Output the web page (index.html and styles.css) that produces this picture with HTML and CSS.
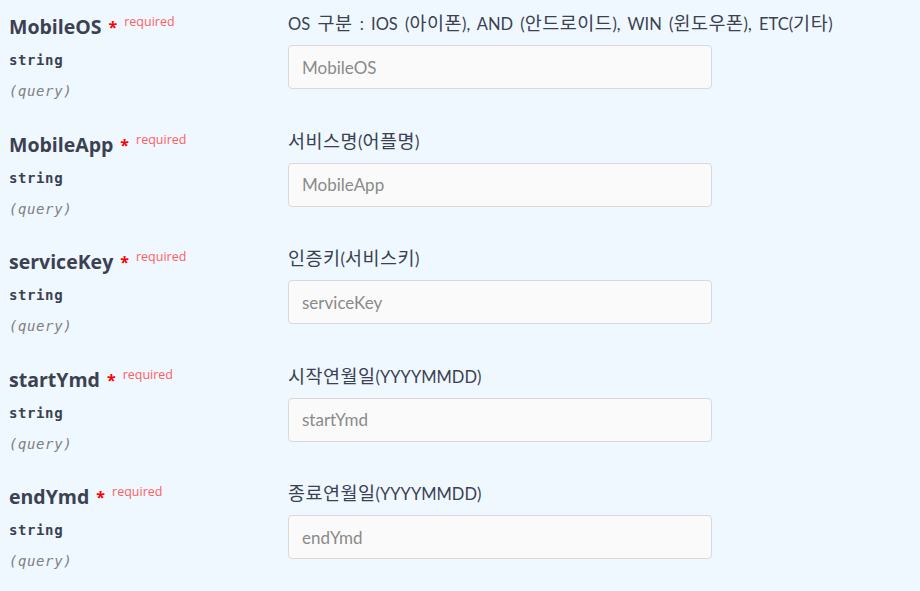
FILE: index.html
```html
<!DOCTYPE html>
<html lang="ko">
<head>
<meta charset="utf-8">
<link rel="stylesheet" href="styles.css">
</head>
<body>
<div class="params">
  <div class="row">
    <div class="col-name">
      <div class="pname">MobileOS<span class="star">*</span><span class="req">required</span></div>
      <div class="ptype">string</div>
      <div class="pin">(query)</div>
    </div>
    <div class="col-desc">
      <div class="desc">OS <span class="ko">구분</span> : IOS (<span class="ko">아이폰</span>), AND (<span class="ko">안드로이드</span>), WIN (<span class="ko">윈도우폰</span>), ETC(<span class="ko">기타</span>)</div>
      <input class="field" type="text" placeholder="MobileOS">
    </div>
  </div>
  <div class="row">
    <div class="col-name">
      <div class="pname">MobileApp<span class="star">*</span><span class="req">required</span></div>
      <div class="ptype">string</div>
      <div class="pin">(query)</div>
    </div>
    <div class="col-desc">
      <div class="desc"><span class="ko">서비스명</span>(<span class="ko">어플명</span>)</div>
      <input class="field" type="text" placeholder="MobileApp">
    </div>
  </div>
  <div class="row">
    <div class="col-name">
      <div class="pname">serviceKey<span class="star">*</span><span class="req">required</span></div>
      <div class="ptype">string</div>
      <div class="pin">(query)</div>
    </div>
    <div class="col-desc">
      <div class="desc"><span class="ko">인증키</span>(<span class="ko">서비스키</span>)</div>
      <input class="field" type="text" placeholder="serviceKey">
    </div>
  </div>
  <div class="row">
    <div class="col-name">
      <div class="pname">startYmd<span class="star">*</span><span class="req">required</span></div>
      <div class="ptype">string</div>
      <div class="pin">(query)</div>
    </div>
    <div class="col-desc">
      <div class="desc"><span class="ko">시작연월일</span>(YYYYMMDD)</div>
      <input class="field" type="text" placeholder="startYmd">
    </div>
  </div>
  <div class="row">
    <div class="col-name">
      <div class="pname">endYmd<span class="star">*</span><span class="req">required</span></div>
      <div class="ptype">string</div>
      <div class="pin">(query)</div>
    </div>
    <div class="col-desc">
      <div class="desc"><span class="ko">종료연월일</span>(YYYYMMDD)</div>
      <input class="field" type="text" placeholder="endYmd">
    </div>
  </div>
</div>
</body>
</html>
```
FILE: styles.css
```css
html, body {
  margin: 0;
  padding: 0;
  background: #eff7ff;
  height: 100%;
  overflow: hidden;
}
body {
  font-family: "Open Sans", "Noto Sans CJK KR", sans-serif;
  color: #3b4151;
}
.params {
  padding: 0 0 0 9px;
}
.row {
  display: grid;
  grid-template-columns: 279px auto;
  height: 117.5px;
  box-sizing: border-box;
  padding-top: 13px;
}
.pname {
  font-family: "Open Sans", sans-serif;
  font-weight: 700;
  font-size: 19.5px;
  line-height: 28px;
  color: #3b4151;
  display: flex;
  align-items: flex-start;
}
.star {
  color: #ff0000;
  font-size: 16px;
  margin-left: 7px;
  line-height: 28px;
  position: relative;
  top: 0;
}
.req {
  color: #ff6060;
  font-weight: 400;
  font-size: 12.5px;
  line-height: 18px;
  margin-left: 7px;
  position: relative;
  top: 0;
}
.ptype {
  font-family: "DejaVu Sans Mono", monospace;
  font-weight: 600;
  font-size: 14px;
  letter-spacing: 0.6px;
  line-height: 30px;
  margin-top: 4px;
}
.pin {
  font-family: "DejaVu Sans Mono", monospace;
  font-style: italic;
  font-size: 14px;
  letter-spacing: 0.6px;
  color: #808080;
  line-height: 31px;
  margin-top: 1px;
}
.desc {
  font-family: "Lato", "Noto Sans CJK KR", sans-serif;
  font-size: 16.5px;
  line-height: 22px;
  height: 22px;
  color: #3b4151;
  margin-top: -2px;
  margin-bottom: 12px;
  white-space: nowrap;
  word-spacing: 3px;
}
.ko {
  font-family: "Noto Sans CJK KR", sans-serif;
  font-size: 18.5px;
  letter-spacing: 0.5px;
  line-height: 22px;
}
.field {
  display: block;
  box-sizing: border-box;
  width: 424px;
  height: 44px;
  margin: 0;
  padding: 0 13px;
  background: #fafafa;
  border: 1px solid #d9d9d9;
  border-radius: 4px;
  font-family: "Lato", sans-serif;
  font-size: 17px;
  color: #3b4151;
  outline: none;
}
.field::placeholder {
  color: #8a8a8a;
}
```
